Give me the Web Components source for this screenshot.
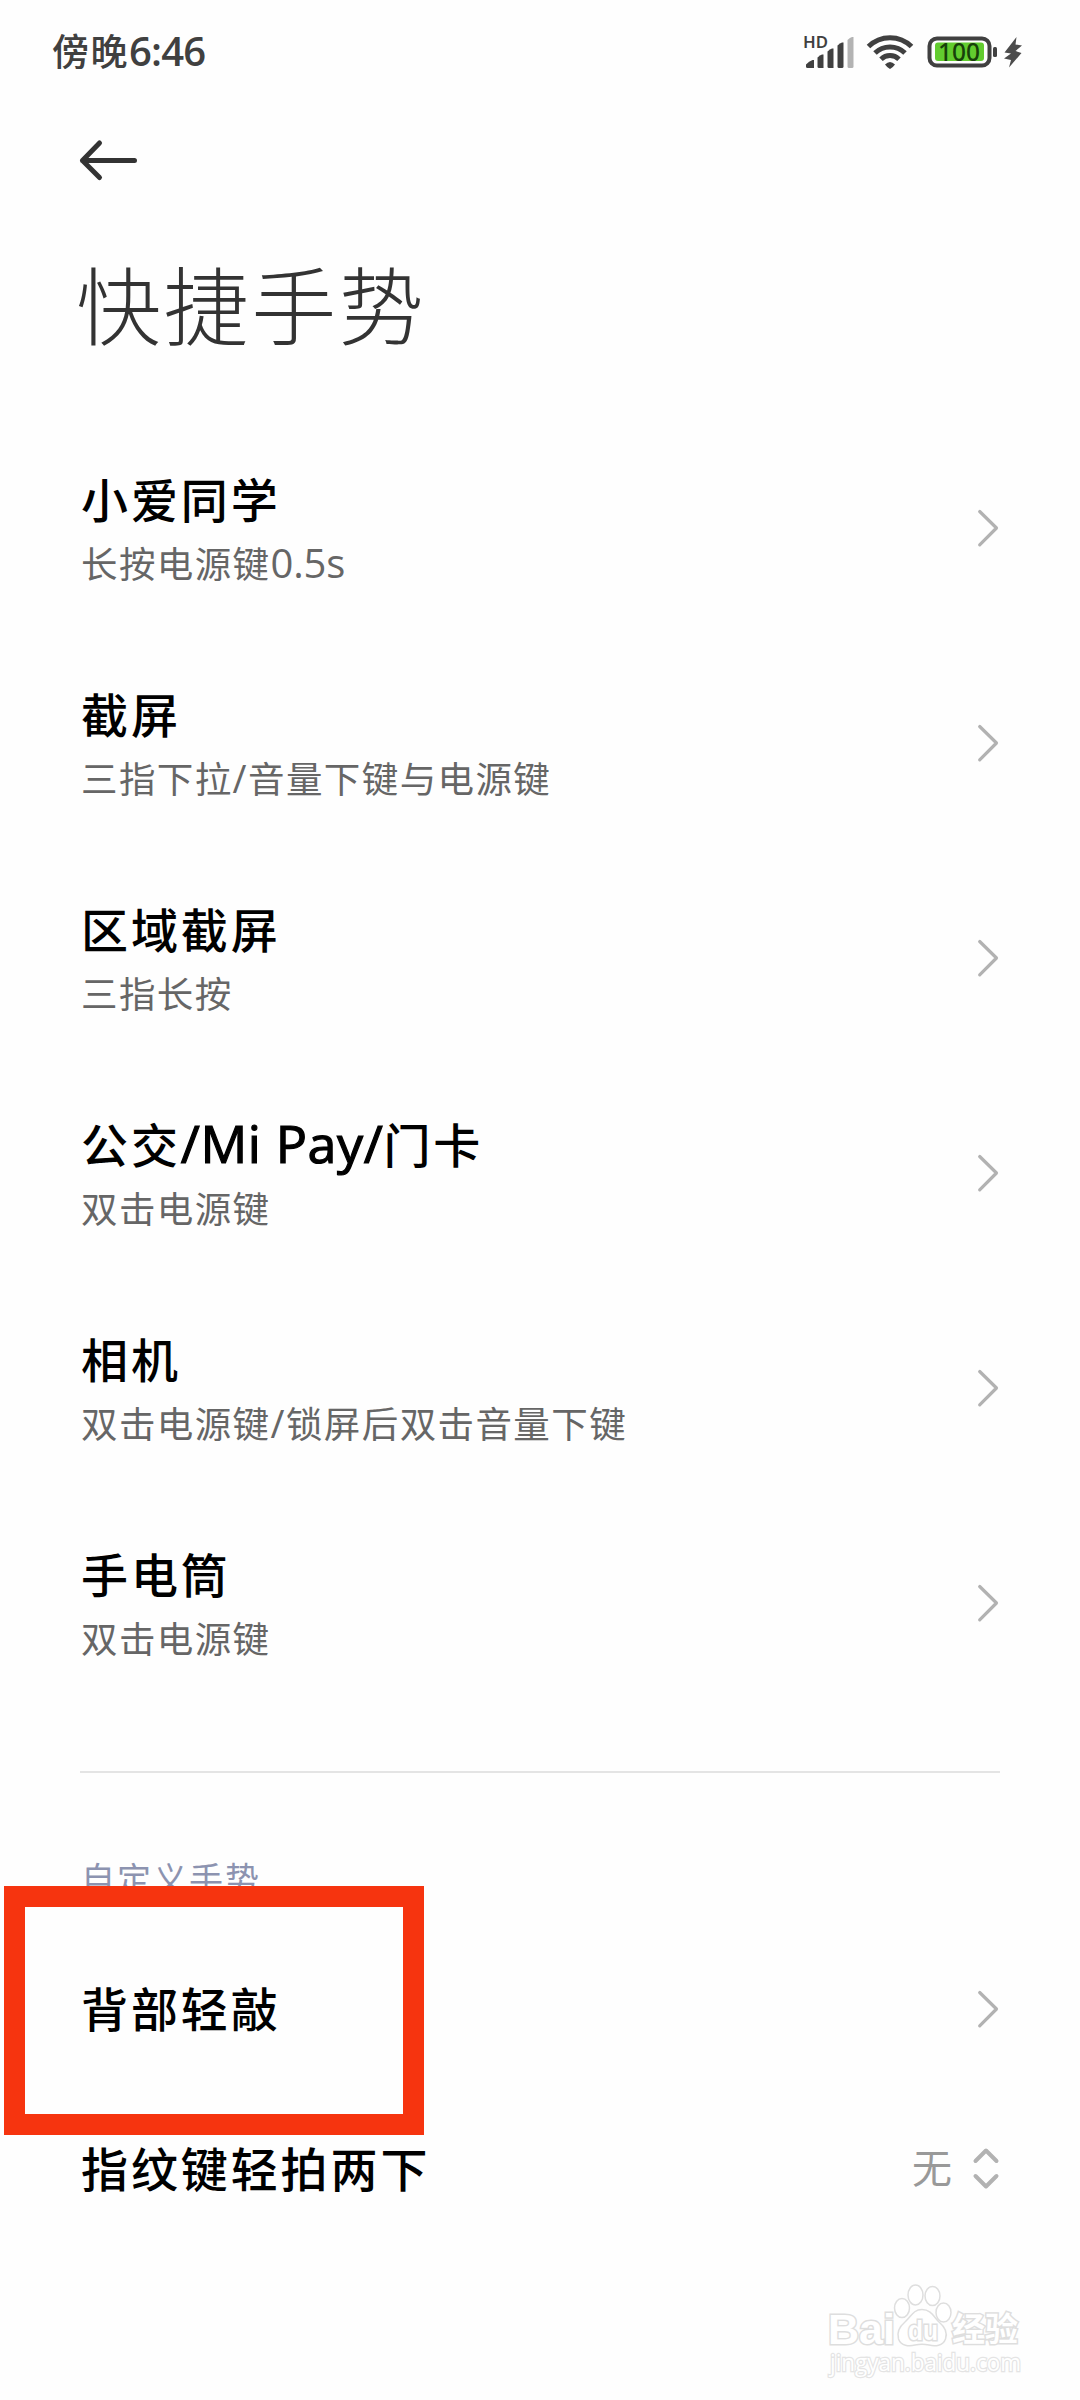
<!DOCTYPE html>
<html lang="zh-CN">
<head>
<meta charset="UTF-8">
<title>快捷手势</title>
<style>
  body {
    margin: 0;
    width: 1080px;
    height: 2400px;
    overflow: hidden;
    background: #fefefe;
    font-family: "Noto Sans CJK SC", sans-serif;
  }
</style>
</head>
<body>
<settings-page>
  <status-bar slot="status" battery="100">傍晚<span class="clock">6:46</span></status-bar>
  <page-header slot="header">快捷手势</page-header>

  <setting-row>小爱同学<span slot="summary">长按电源键<latin-text style="--size: 40px; --spacing: -0.2px">0.5s</latin-text></span></setting-row>
  <setting-row>截屏<span slot="summary">三指下拉<latin-text style="--spacing: 1.5px">/</latin-text>音量下键与电源键</span></setting-row>
  <setting-row>区域截屏<span slot="summary">三指长按</span></setting-row>
  <setting-row>公交<latin-text style="--size: 52px; --thicken: 1.2px; --spacing: 0.6px">/Mi Pay/</latin-text>门卡<span slot="summary">双击电源键</span></setting-row>
  <setting-row>相机<span slot="summary">双击电源键<latin-text style="--spacing: 1.5px">/</latin-text>锁屏后双击音量下键</span></setting-row>
  <setting-row>手电筒<span slot="summary">双击电源键</span></setting-row>

  <section-label>自定义手势</section-label>
  <setting-row compact marked>背部轻敲</setting-row>
  <setting-row compact picker value="无">指纹键轻拍两下</setting-row>

  <page-watermark slot="overlay"></page-watermark>
</settings-page>

<script>
class SettingsPage extends HTMLElement {
  connectedCallback() {
    this.attachShadow({ mode: 'open' });
    this.shadowRoot.innerHTML = `
      <style>
        :host {
          display: flex;
          flex-direction: column;
          position: relative;
          height: 2400px;
        }
        main {
          display: flex;
          flex-direction: column;
        }
      </style>
      <slot name="status"></slot>
      <slot name="header"></slot>
      <main><slot></slot></main>
      <slot name="overlay"></slot>
    `;
  }
}

class StatusBar extends HTMLElement {
  connectedCallback() {
    this.attachShadow({ mode: 'open' });
    this.shadowRoot.innerHTML = `
      <style>
        :host {
          display: flex;
          justify-content: space-between;
          align-items: center;
          box-sizing: border-box;
          height: 104px;
          padding: 0 56px 0 52px;
          color: #404040;
        }
        .time {
          font-size: 37px;
          font-weight: 500;
          letter-spacing: 1.5px;
          line-height: 52px;
          padding-bottom: 3px;
        }
        ::slotted(.clock) {
          font-family: "Open Sans", sans-serif;
          font-size: 40px;
          font-weight: 600;
          letter-spacing: -0.8px;
        }
        svg { display: block; }
        text { font-family: "Noto Sans", sans-serif; }
      </style>
      <div class="time"><slot></slot></div>
      <svg width="222" height="56" viewBox="802 24 222 56">
        <text x="803" y="48" font-size="16.5" font-weight="600" fill="#404040" textLength="25" lengthAdjust="spacingAndGlyphs">HD</text>
        <g fill="#404040">
          <path d="M806 66.500V64.500Q809 61 812.500 60H814V68H807.500Q806 68 806 66.500Z"/>
          <path d="M817.500 66.500V57.500Q820 55 822 54.500H823.500V68H819Q817.500 68 817.500 66.500Z"/>
          <path d="M827.500 66.500V51.500Q830 49 832 48.500H833.500V68H829Q827.500 68 827.500 66.500Z"/>
          <path d="M837.500 66.500V45.500Q840 43 842 42.500H843.500V66.500Q843.500 68 842 68H839Q837.500 68 837.500 66.500Z"/>
          <path fill="#b3b3b3" d="M847.500 66.500V40Q850 37.500 852 37H853.500V66.500Q853.500 68 852 68H849Q847.500 68 847.500 66.500Z"/>
        </g>
        <g fill="none" stroke="#404040" stroke-width="5">
          <path d="M868.500 46.500A30.500 30.500 0 0 1 911.500 46.500"/>
          <path d="M875 53A21.500 21.500 0 0 1 905 53"/>
          <path d="M881 59.200A13 13 0 0 1 899 59.200"/>
        </g>
        <path fill="#404040" d="M885 64.500Q890 59.500 895 64.500Q892.500 68 890 69Q887.500 68 885 64.500Z"/>
        <rect x="929.500" y="38.500" width="60" height="27" rx="7.500" fill="none" stroke="#404040" stroke-width="4"/>
        <rect x="935" y="42.500" width="49" height="18.500" rx="3" fill="#62cc2f"/>
        <rect x="993" y="47" width="4" height="10" rx="1.500" fill="#404040"/>
        <text x="938" y="61" font-size="24.500" font-weight="500" fill="#17400a" textLength="42" lengthAdjust="spacingAndGlyphs">100</text>
        <path fill="#4c4c4c" d="M1016.500 37L1004.500 52.500L1011 53.500L1004 58.500L1011 60L1009 67.500L1021.500 53L1015.500 51L1022 45.500L1015.500 44.500Z"/>
      </svg>
    `;
  }
}

class PageHeader extends HTMLElement {
  connectedCallback() {
    this.attachShadow({ mode: 'open' });
    this.shadowRoot.innerHTML = `
      <style>
        :host {
          display: flex;
          flex-direction: column;
          box-sizing: border-box;
          height: 316px;
          padding: 32px 76px 0;
          color: #333;
        }
        svg { display: block; }
        h1 {
          margin: 58px 0 0;
          font-size: 85px;
          font-weight: 300;
          line-height: 120px;
          letter-spacing: 2.6px;
        }
      </style>
      <svg width="64" height="48" viewBox="76 136 64 48" fill="none" stroke="#333" stroke-width="5" stroke-linecap="round" stroke-linejoin="round">
        <path d="M134.500 160.500H82.500M99.500 143L82.500 160.500L99.500 177.500"/>
      </svg>
      <h1><slot></slot></h1>
    `;
  }
}

// Latin runs next to Chinese text, no whitespace around the slot
class LatinText extends HTMLElement {
  connectedCallback() {
    this.attachShadow({ mode: 'open' });
    this.shadowRoot.innerHTML = `<style>
        :host {
          font-family: "Open Sans", sans-serif;
          font-size: var(--size, 38px);
          letter-spacing: var(--spacing, 0);
          -webkit-text-stroke: var(--thicken, 0);
          line-height: 1;
        }
      </style><slot></slot>`;
  }
}

class SettingRow extends HTMLElement {
  connectedCallback() {
    const picker = this.hasAttribute('picker');
    const icon = picker
      ? '<svg width="28" height="44" viewBox="0 0 28 44" stroke-width="4"><path d="M3.500 14L14 3.500L24.500 14M3.500 29L14 39.500L24.500 29"/></svg>'
      : '<svg width="24" height="40" viewBox="0 0 24 40" stroke-width="3.200"><path d="M3.700 3.500L20.500 20L3.700 36.800"/></svg>';
    this.attachShadow({ mode: 'open' });
    this.shadowRoot.innerHTML = `
      <style>
        :host {
          display: flex;
          align-items: center;
          position: relative;
          box-sizing: border-box;
          height: 215px;
          padding: 0 80px 0 81px;
        }
        :host([compact]) { height: 160px; }
        .text { flex: 1; }
        .title {
          font-size: 47px;
          font-weight: 500;
          line-height: 68px;
          height: 68px;
          letter-spacing: 2.9px;
          color: #000;
          white-space: nowrap;
        }
        :host([compact]) .title { padding-bottom: 5px; }
        .summary {
          font-size: 36.500px;
          line-height: 62px;
          height: 60px;
          letter-spacing: 1.400px;
          color: #666;
          white-space: nowrap;
        }
        :host([compact]) .summary { display: none; }
        .value {
          font-size: 40px;
          line-height: 60px;
          padding-bottom: 6px;
          margin-right: 20px;
          color: #999;
        }
        svg {
          display: block;
          fill: none;
          stroke: #b2b2b2;
          stroke-linecap: round;
          stroke-linejoin: round;
        }
        .mark {
          display: none;
          position: absolute;
          left: 4px;
          top: -43px;
          box-sizing: border-box;
          width: 420px;
          height: 249px;
          border: 21px solid #f6340f;
        }
        :host([marked]) .mark { display: block; }
      </style>
      <div class="text">
        <div class="title"><slot></slot></div>
        <div class="summary"><slot name="summary"></slot></div>
      </div>
      ${picker ? `<div class="value">${this.getAttribute('value')}</div>` : ''}
      ${icon}
      <div class="mark"></div>
    `;
  }
}

class SectionLabel extends HTMLElement {
  connectedCallback() {
    this.attachShadow({ mode: 'open' });
    this.shadowRoot.innerHTML = `
      <style>
        :host {
          display: block;
          box-sizing: border-box;
          height: 158px;
          margin: 61px 80px 0;
          padding: 81px 0 0 1px;
          border-top: 2px solid #e4e4e4;
          font-size: 34px;
          line-height: 48px;
          letter-spacing: 2px;
          color: #8c93b0;
        }
      </style>
      <slot></slot>
    `;
  }
}

class PageWatermark extends HTMLElement {
  connectedCallback() {
    this.attachShadow({ mode: 'open' });
    this.shadowRoot.innerHTML = `
      <style>
        :host {
          position: absolute;
          left: 820px;
          top: 2276px;
        }
        svg {
          display: block;
          fill: #fff;
          stroke: #dedede;
          stroke-width: 1.5;
        }
        text {
          font-family: "Liberation Sans", sans-serif;
          font-weight: 700;
          paint-order: stroke;
          stroke-width: 3;
        }
        .zh { font-family: "Noto Sans CJK SC", sans-serif; }
        .url { font-family: "Open Sans", sans-serif; font-weight: 400; stroke-width: 2.4; stroke: #e4e4e4; }
      </style>
      <svg width="210" height="104" viewBox="820 2276 210 104">
        <text x="828" y="2344" font-size="43" textLength="67" lengthAdjust="spacingAndGlyphs">Bai</text>
        <ellipse cx="902" cy="2308" rx="7.500" ry="9.500"/>
        <ellipse cx="915.500" cy="2295" rx="7.500" ry="10"/>
        <ellipse cx="932.500" cy="2296" rx="7.500" ry="9.500"/>
        <ellipse cx="943.500" cy="2312.500" rx="7.500" ry="9.500"/>
        <path d="M922 2309.500C931 2309.500 934 2317 939 2322C945 2327 948 2332 945.500 2339C943 2346 935 2346.500 929 2345Q922 2343.500 915 2345C909 2346.500 901 2346 898.500 2339C896.500 2332 899 2327 905 2322C911 2317 913 2309.500 922 2309.500Z"/>
        <text x="908" y="2340" font-size="27" textLength="30" lengthAdjust="spacingAndGlyphs">du</text>
        <text class="zh" x="952" y="2341" font-size="33">经验</text>
        <text class="url" x="830" y="2371" font-size="23" textLength="191" lengthAdjust="spacingAndGlyphs">jingyan.baidu.com</text>
      </svg>
    `;
  }
}

customElements.define('settings-page', SettingsPage);
customElements.define('status-bar', StatusBar);
customElements.define('page-header', PageHeader);
customElements.define('latin-text', LatinText);
customElements.define('setting-row', SettingRow);
customElements.define('section-label', SectionLabel);
customElements.define('page-watermark', PageWatermark);
</script>
</body>
</html>
